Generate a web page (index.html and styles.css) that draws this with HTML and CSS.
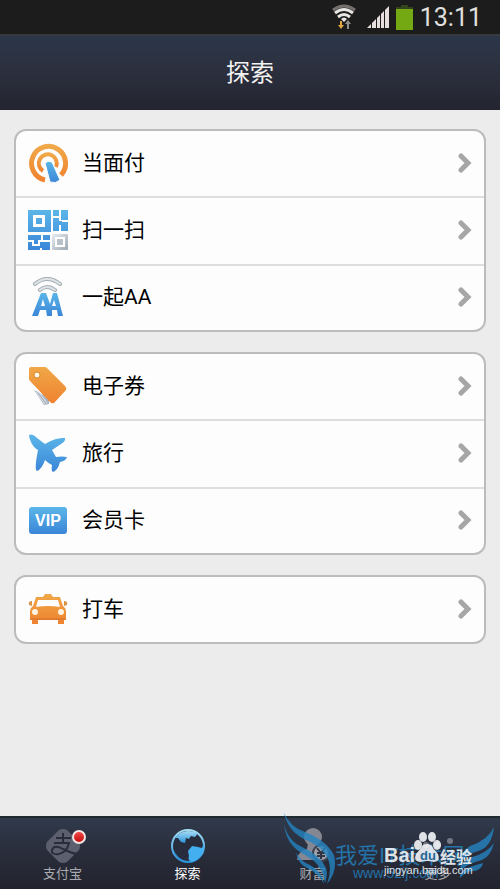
FILE: index.html
```
<!DOCTYPE html>
<html lang="zh-CN">
<head>
  <meta charset="UTF-8">
  <meta name="viewport" content="width=device-width, initial-scale=1">
  <title>探索</title>
  <link rel="stylesheet" href="styles.css">
</head>
<body>

<!-- shared gradients and the row arrow -->
<svg class="defs" width="0" height="0" aria-hidden="true">
  <defs>
    <linearGradient id="blue" x1="0" y1="0" x2="0" y2="1">
      <stop offset="0" stop-color="#5bb6e8"/>
      <stop offset="1" stop-color="#3b86d8"/>
    </linearGradient>
    <linearGradient id="orange" x1="0" y1="0" x2="0" y2="1">
      <stop offset="0" stop-color="#f0a848"/>
      <stop offset="1" stop-color="#ef8230"/>
    </linearGradient>
    <linearGradient id="silver" x1="0" y1="0" x2="1" y2="1">
      <stop offset="0" stop-color="#e8ecef"/>
      <stop offset="1" stop-color="#9da8b3"/>
    </linearGradient>
    <linearGradient id="globe" x1="0" y1="0" x2="0" y2="1">
      <stop offset="0" stop-color="#a6dcf4"/>
      <stop offset="1" stop-color="#2a94dc"/>
    </linearGradient>
    <symbol id="arrow" viewBox="0 0 14 22">
      <path d="M3 4l7 7-7 7" fill="none" stroke="#a6a6a6" stroke-width="5" stroke-linecap="round" stroke-linejoin="miter"/>
    </symbol>
  </defs>
</svg>

<div class="status">
  <svg width="24" height="26" viewBox="0 0 24 26" fill="none" stroke-width="3">
    <path d="M1 6Q12-2 23 6" stroke="#77716e"/>
    <path d="M3 9Q12 2 21 9M6 13Q12 8 18 13" stroke="#e9e5e3"/>
    <path d="M9 15Q12 12 15 15L12 18z" fill="#e9e5e3"/>
    <path d="M9 17v4" stroke="#e2a544" stroke-width="2"/>
    <path d="M6 21h6l-3 4z" fill="#e2a544"/>
    <path d="M16 25v-5" stroke="#918e8b" stroke-width="2"/>
    <path d="M13 20h6l-3-4z" fill="#918e8b"/>
  </svg>
  <svg class="signal" width="22" height="22" viewBox="0 0 22 22" fill="#e6dfdd">
    <path d="M0 22L4 18V22zM5 17L9 13V22H5zM10 12L13 9V22H10zM14 8L17 5V22H14zM18 4L22 0V22H18z"/>
  </svg>
  <svg class="battery" width="17" height="25" viewBox="0 0 17 25">
    <path d="M5 0h7v2h5v3H0V2h5z" fill="#33441c"/>
    <path d="M0 4h17v21H0z" fill="#75a914"/>
  </svg>
  <span class="clock">13:11</span>
</div>

<header class="header">
  <h1>探索</h1>
</header>

<main class="content">
  <section class="card">
    <a class="row" href="#">
      <svg class="icon" viewBox="0 0 40 40">
        <path d="M17 37A17 17 0 1 1 33 32" fill="none" stroke="url(#orange)" stroke-width="5"/>
        <path d="M15 28A9 9 0 1 1 28 24" fill="none" stroke="url(#orange)" stroke-width="4"/>
        <path d="M17 20q3-3 7-1l8 18q-4 4-10 2z" fill="url(#blue)" stroke="#fff"/>
      </svg>
      <span class="label">当面付</span>
      <svg class="arrow"><use href="#arrow"/></svg>
    </a>
    <a class="row" href="#">
      <svg class="icon" viewBox="0 0 40 40">
        <path fill="url(#blue)" fill-rule="evenodd" d="M0 0h23v22H0zM5 5v12h12V5zM8 8h6v6H8zM25 0h6v6h-6zM33 0h7v10h-7zM25 8h6v3h3v1h6v9h-7v-6h-2v6h-6zM0 25h13v5h-3v4H6v-4H0zM15 25h7v5h-7zM0 32h4v4h8v-4h10v8H14v-2h-2v2H0z"/>
        <rect x="24" y="24" width="16" height="16" rx="1" fill="url(#silver)"/>
        <rect x="28" y="28" width="8" height="8" fill="#b9c2c9" stroke="#fff" stroke-width="2"/>
      </svg>
      <span class="label">扫一扫</span>
      <svg class="arrow"><use href="#arrow"/></svg>
    </a>
    <a class="row" href="#">
      <svg class="icon" viewBox="0 0 40 40">
        <path d="M7 7Q19-3 32 7M12 13Q19 7 27 13" fill="none" stroke="#a3adb3" stroke-width="4" stroke-linecap="round"/>
        <path d="M7 7Q19-3 32 7M12 13Q19 7 27 13" fill="none" stroke="#dfe4e7" stroke-width="2" stroke-linecap="round"/>
        <path fill="url(#blue)" fill-rule="evenodd" d="M4 39L13 16h5l4 11 3-11h4l6 23h-5l-1-6h-5v6h-5l-1-6h-6l-2 6zM13 29h4l-2-7zM24 29h4l-2-6z"/>
      </svg>
      <span class="label">一起AA</span>
      <svg class="arrow"><use href="#arrow"/></svg>
    </a>
  </section>

  <section class="card">
    <a class="row" href="#">
      <svg class="icon" viewBox="0 0 40 40">
        <path d="M6 24L16 39l5-1V32z" fill="#a9b3c1"/>
        <path d="M8 26l9 12M10 25l9 12" stroke="#e4e8ec"/>
        <path d="M3 1h14q1 0 2 1l18 18q2 2 1 4L26 37q-2 1-4-1L2 15q-1-1-1-2V3q0-2 2-2z" fill="url(#orange)"/>
        <circle cx="9" cy="9" r="3" fill="#fff8eb" stroke="#d68b2d"/>
      </svg>
      <span class="label">电子券</span>
      <svg class="arrow"><use href="#arrow"/></svg>
    </a>
    <a class="row" href="#">
      <svg class="icon" viewBox="0 0 40 40">
        <path fill="url(#blue)" d="M1 2Q5 0 9 5L17 11Q28 4 37 5Q38 8 33 11L24 17L28 24Q34 23 39 24Q38 28 32 29Q30 37 25 39Q23 38 24 32Q20 30 17 27Q14 36 9 38Q6 37 10 17Q5 14 3 9Q1 5 1 2z"/>
      </svg>
      <span class="label">旅行</span>
      <svg class="arrow"><use href="#arrow"/></svg>
    </a>
    <a class="row" href="#">
      <svg class="icon" viewBox="0 0 40 40">
        <rect x="1" y="7" width="38" height="27" rx="3" fill="url(#blue)"/>
        <text class="vip" x="20" y="26" text-anchor="middle">VIP</text>
      </svg>
      <span class="label">会员卡</span>
      <svg class="arrow"><use href="#arrow"/></svg>
    </a>
  </section>

  <section class="card">
    <a class="row" href="#">
      <svg class="icon" viewBox="0 0 40 40">
        <path fill="url(#orange)" fill-rule="evenodd" d="M8 8h7l2-3h6l2 3h7l3 9q3 2 3 6v8h-2v4h-6v-4H10v4H4v-4H2v-8q0-4 3-6zM10 11L8 18q12-2 24 0l-2-7z"/>
        <path d="M4 12q-4 0-3 4l3 1zM36 12q4 0 3 4l-3 1z" fill="#d99448"/>
        <path d="M3 30h34" stroke="#d56a29"/>
        <circle cx="7" cy="23" r="3" fill="#fff3df"/>
        <circle cx="33" cy="23" r="3" fill="#fff3df"/>
      </svg>
      <span class="label">打车</span>
      <svg class="arrow"><use href="#arrow"/></svg>
    </a>
  </section>
</main>

<nav class="tabs">
  <a class="tab" href="#">
    <span class="tab-icon">
      <svg width="36" height="36" viewBox="0 0 36 36">
        <path d="M14 2q4-2 8 0l12 12q2 4 0 8L22 34q-4 2-8 0L2 22q-2-4 0-8z" fill="#5c606e"/>
        <path d="M11 10h15M18 5v10M9 15h16M24 15Q22 24 14 26Q6 27 7 22Q9 16 18 21Q26 25 32 26" fill="none" stroke="#292d3a" stroke-width="2"/>
      </svg>
      <i class="dot"></i>
    </span>
    <span>支付宝</span>
  </a>
  <a class="tab active" href="#">
    <span class="tab-icon">
      <svg width="36" height="36" viewBox="0 0 36 36">
        <circle cx="18" cy="18" r="16" fill="#272d3c" stroke="url(#globe)" stroke-width="2"/>
        <path d="M5 10Q13-1 28 5L25 9L21 8L19 11L16 10L15 15L11 14L8 10z" fill="url(#globe)"/>
        <path d="M34 15Q35 29 22 34Q17 32 19 28L18 23L22 18L28 19L32 20z" fill="#43aef0"/>
        <path d="M3 21Q7 30 15 33Q5 31 3 21z" fill="#2689ce"/>
      </svg>
    </span>
    <span>探索</span>
  </a>
  <a class="tab" href="#">
    <span class="tab-icon">
      <svg width="36" height="36" viewBox="0 0 36 36">
        <circle cx="18" cy="9" r="9" fill="#858893"/>
        <path d="M13 15h10l1 6 8 4v7H2q0-8 10-11z" fill="#858893"/>
        <circle cx="26" cy="25" r="8" fill="#a0a2aa" stroke="#3c4150" stroke-width="2"/>
        <path d="M22 20l4 5 4-5M26 25v6M22 25h8M22 28h8" fill="none" stroke="#303543" stroke-width="2"/>
      </svg>
    </span>
    <span>财富</span>
  </a>
  <a class="tab" href="#">
    <span class="tab-icon">
      <svg width="36" height="36" viewBox="0 0 36 36" fill="#747985">
        <circle cx="6" cy="17" r="3"/><circle cx="18" cy="17" r="3"/><circle cx="30" cy="13" r="3"/>
      </svg>
    </span>
    <span>更多</span>
  </a>

  <svg class="marks" width="220" height="80" viewBox="0 0 220 80">
    <g fill="#2484c2" opacity=".8">
      <path d="M4 4Q10 18 25 23Q46 31 54 46Q58 62 47 75Q53 58 47 48Q40 36 24 30Q8 22 4 4z"/>
      <path d="M4 15Q8 32 22 38Q40 46 46 59Q48 66 45 74Q43 60 34 52Q27 47 20 43Q6 34 4 15z"/>
      <path d="M16 43Q20 52 30 56Q42 62 44 75Q38 64 29 60Q18 56 16 43z"/>
      <path d="M214 18Q208 31 190 37Q180 43 178 57Q186 45 201 41Q212 36 214 18z"/>
      <path d="M214 34Q207 44 192 48Q181 52 179 63Q188 54 202 51Q211 47 214 34z"/>
      <path d="M203 54Q195 56 187 59Q179 63 180 69Q187 61 195 62Q202 60 203 54z"/>
      <text class="mark-name" x="55" y="54">我爱IT技术网</text>
      <text class="mark-site" x="73" y="69">www.52ij.com</text>
    </g>
    <g fill="#f2f4f7" opacity=".9">
      <text class="baidu" x="104" y="53">Bai</text>
      <ellipse cx="138" cy="36" rx="4" ry="5"/>
      <ellipse cx="143" cy="28" rx="4" ry="5"/>
      <ellipse cx="152" cy="28" rx="4" ry="5"/>
      <ellipse cx="157" cy="36" rx="4" ry="5"/>
      <path d="M147 35q5 0 6 4l5 6q3 7-4 8-7-2-14 0-7-1-4-8l5-6q1-4 6-4z"/>
      <text class="du" x="140" y="51">du</text>
      <text class="jingyan" x="160" y="54">经验</text>
      <text class="baidu-site" x="104" y="65">jingyan.baidu.com</text>
    </g>
  </svg>
</nav>

</body>
</html>
```

FILE: styles.css
```
* {
  box-sizing: border-box;
}

body {
  margin: 0;
  min-height: 100vh;
  display: flex;
  flex-direction: column;
  background: #ececec;
  font-family: "Liberation Sans", "Noto Sans CJK SC", sans-serif;
}

a {
  color: inherit;
  text-decoration: none;
}

.defs {
  display: block;
}

.status {
  display: flex;
  justify-content: flex-end;
  align-items: center;
  height: 34px;
  padding-right: 18px;
  background: #1c1c1c;
}

.signal {
  margin-left: 11px;
}

.battery {
  margin-left: 7px;
}

.clock {
  margin-left: 7px;
  color: #e2e0df;
  font-family: Roboto, sans-serif;
  font-size: 25px;
}

.header {
  display: flex;
  justify-content: center;
  align-items: center;
  height: 76px;
  padding-bottom: 5px;
  border-top: 2px solid #36393e;
  background: linear-gradient(#2b3649, #2c303e 45%, #232430);
}

.header h1 {
  margin: 0;
  color: #f2f2f2;
  font-size: 24px;
  font-weight: normal;
}

.content {
  flex: 1;
  display: flex;
  flex-direction: column;
  gap: 20px;
  padding: 19px 14px;
}

.card {
  overflow: hidden;
  border: 2px solid #bcbcbc;
  border-radius: 12px;
  background: #fdfdfd;
}

.row {
  display: flex;
  align-items: center;
  height: 65px;
  padding: 0 12px 2px;
  color: #000;
  font-size: 21px;
}

.row + .row {
  height: 68px;
  border-top: 2px solid #dedede;
}

.row + .row:last-child {
  height: 66px;
}

.icon {
  width: 40px;
  height: 40px;
  margin-right: 14px;
}

.label {
  padding-bottom: 4px;
  font-family: Roboto, "Noto Sans CJK SC", sans-serif;
}

.arrow {
  width: 14px;
  height: 22px;
  margin-left: auto;
}

.vip {
  fill: #fff;
  font-size: 16px;
  font-weight: bold;
}

.tabs {
  position: relative;
  display: grid;
  grid-template-columns: repeat(4, 1fr);
  height: 73px;
  border-top: 2px solid #1f2a30;
  background: linear-gradient(#303a4b, #292d3b 50%, #22232d);
}

.tab {
  display: flex;
  flex-direction: column;
  align-items: center;
  padding-top: 10px;
  color: #a8aab0;
  font-size: 13px;
  line-height: 18px;
}

.tab.active {
  color: #fff;
}

.tab-icon {
  position: relative;
  height: 37px;
}

.tab-icon svg {
  display: block;
}

.dot {
  position: absolute;
  top: 2px;
  right: -5px;
  width: 14px;
  height: 14px;
  border: 2px solid #f4e4e4;
  border-radius: 50%;
  background: linear-gradient(#f04a48, #c80d0d);
}

.marks {
  position: absolute;
  right: 0;
  bottom: 0;
  pointer-events: none;
}

.mark-name {
  font-size: 22px;
}

.mark-site {
  font-size: 14px;
}

.baidu {
  font-size: 20px;
  font-weight: bold;
}

.du {
  fill: #236c9e;
  font-size: 13px;
  font-weight: bold;
}

.jingyan {
  font-size: 16px;
  font-weight: bold;
}

.baidu-site {
  font-size: 11px;
}
```
